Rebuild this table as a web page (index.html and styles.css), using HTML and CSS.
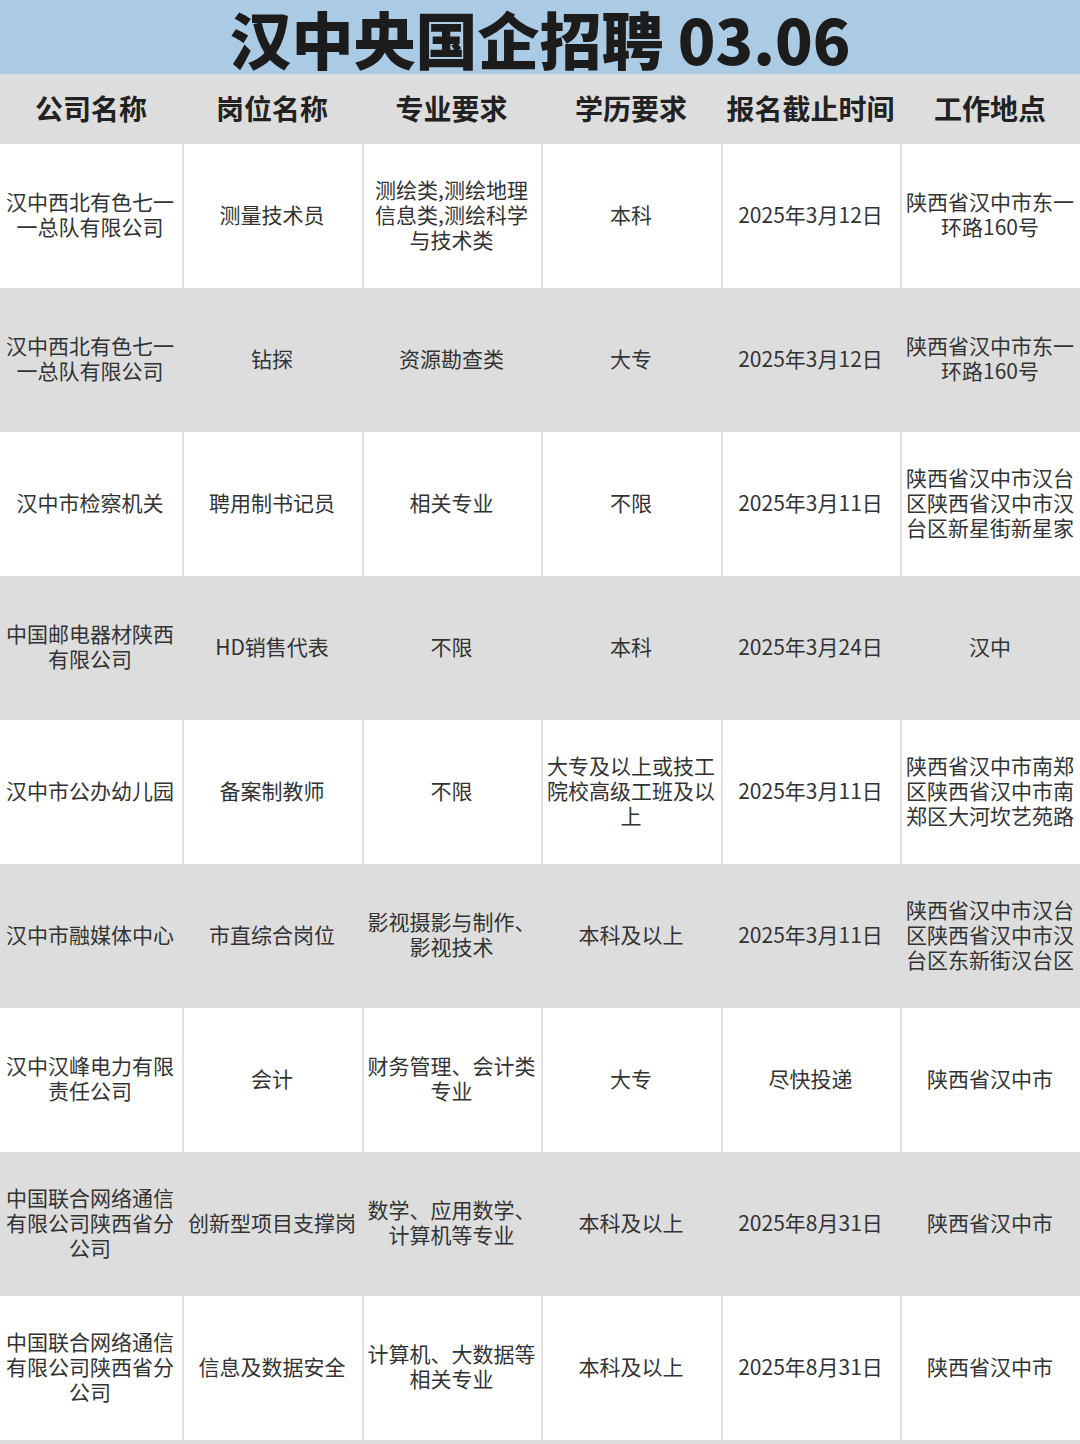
FILE: index.html
```html
<!DOCTYPE html>
<html lang="zh-CN">
<head>
<meta charset="utf-8">
<title>汉中央国企招聘 03.06</title>
<link rel="stylesheet" href="styles.css">
</head>
<body>
<div class="page">
  <header class="title">汉中央国企招聘 03.06</header>
  <div class="table">
    <div class="row head">
      <div class="cell">公司名称</div>
      <div class="cell">岗位名称</div>
      <div class="cell">专业要求</div>
      <div class="cell">学历要求</div>
      <div class="cell">报名截止时间</div>
      <div class="cell">工作地点</div>
    </div>
    <div class="row light">
      <div class="cell">汉中西北有色七一一总队有限公司</div>
      <div class="cell">测量技术员</div>
      <div class="cell">测绘类,测绘地理信息类,测绘科学与技术类</div>
      <div class="cell">本科</div>
      <div class="cell">2025年3月12日</div>
      <div class="cell">陕西省汉中市东一环路160号</div>
    </div>
    <div class="row dark">
      <div class="cell">汉中西北有色七一一总队有限公司</div>
      <div class="cell">钻探</div>
      <div class="cell">资源勘查类</div>
      <div class="cell">大专</div>
      <div class="cell">2025年3月12日</div>
      <div class="cell">陕西省汉中市东一环路160号</div>
    </div>
    <div class="row light">
      <div class="cell">汉中市检察机关</div>
      <div class="cell">聘用制书记员</div>
      <div class="cell">相关专业</div>
      <div class="cell">不限</div>
      <div class="cell">2025年3月11日</div>
      <div class="cell">陕西省汉中市汉台区陕西省汉中市汉台区新星街新星家</div>
    </div>
    <div class="row dark">
      <div class="cell">中国邮电器材陕西有限公司</div>
      <div class="cell">HD销售代表</div>
      <div class="cell">不限</div>
      <div class="cell">本科</div>
      <div class="cell">2025年3月24日</div>
      <div class="cell">汉中</div>
    </div>
    <div class="row light">
      <div class="cell">汉中市公办幼儿园</div>
      <div class="cell">备案制教师</div>
      <div class="cell">不限</div>
      <div class="cell">大专及以上或技工院校高级工班及以上</div>
      <div class="cell">2025年3月11日</div>
      <div class="cell">陕西省汉中市南郑区陕西省汉中市南郑区大河坎艺苑路</div>
    </div>
    <div class="row dark">
      <div class="cell">汉中市融媒体中心</div>
      <div class="cell">市直综合岗位</div>
      <div class="cell">影视摄影与制作、影视技术</div>
      <div class="cell">本科及以上</div>
      <div class="cell">2025年3月11日</div>
      <div class="cell">陕西省汉中市汉台区陕西省汉中市汉台区东新街汉台区</div>
    </div>
    <div class="row light">
      <div class="cell">汉中汉峰电力有限责任公司</div>
      <div class="cell">会计</div>
      <div class="cell">财务管理、会计类专业</div>
      <div class="cell">大专</div>
      <div class="cell">尽快投递</div>
      <div class="cell">陕西省汉中市</div>
    </div>
    <div class="row dark">
      <div class="cell">中国联合网络通信有限公司陕西省分公司</div>
      <div class="cell">创新型项目支撑岗</div>
      <div class="cell">数学、应用数学、计算机等专业</div>
      <div class="cell">本科及以上</div>
      <div class="cell">2025年8月31日</div>
      <div class="cell">陕西省汉中市</div>
    </div>
    <div class="row light">
      <div class="cell">中国联合网络通信有限公司陕西省分公司</div>
      <div class="cell">信息及数据安全</div>
      <div class="cell">计算机、大数据等相关专业</div>
      <div class="cell">本科及以上</div>
      <div class="cell">2025年8月31日</div>
      <div class="cell">陕西省汉中市</div>
    </div>
  </div>
</div>
</body>
</html>
```

FILE: styles.css
```css
html, body {
  margin: 0;
  padding: 0;
  background: #ffffff;
}

body {
  width: 1080px;
  font-family: "Noto Sans CJK SC", "Noto Sans", sans-serif;
  color: #333333;
}

.page {
  display: flex;
  flex-direction: column;
  width: 1080px;
  height: 1444px;
  overflow: hidden;
}

.title {
  display: flex;
  align-items: center;
  justify-content: center;
  box-sizing: border-box;
  height: 74px;
  padding-top: 2px;
  background: #abcbe5;
  color: #1c1c1c;
  font-size: 62px;
  font-weight: 900;
  line-height: 68px;
  white-space: nowrap;
}

.table {
  display: flex;
  flex-direction: column;
  border-bottom: 4px solid #dddddd;
}

.row {
  display: grid;
  grid-template-columns: 182px 180px 179px 180px 179px 180px;
  height: 144px;
}

.row.head {
  height: 70px;
  background: #dddddd;
}

.row.dark {
  background: #dddddd;
}

.row.light {
  background: #ffffff;
}

.cell {
  display: flex;
  align-items: center;
  justify-content: center;
  text-align: center;
  padding: 0 5px 4px 3px;
  font-size: 21px;
  line-height: 25px;
  color: #333333;
  box-sizing: border-box;
  overflow: hidden;
  word-break: break-all;
}

.row.light .cell + .cell {
  border-left: 2px solid #e0e0e0;
}

.row.dark .cell + .cell {
  border-left: 2px solid transparent;
}

.row.head .cell {
  font-size: 28px;
  font-weight: 700;
  color: #222222;
  line-height: 32px;
  padding: 0 0 2px;
  border-left: none;
}
```
